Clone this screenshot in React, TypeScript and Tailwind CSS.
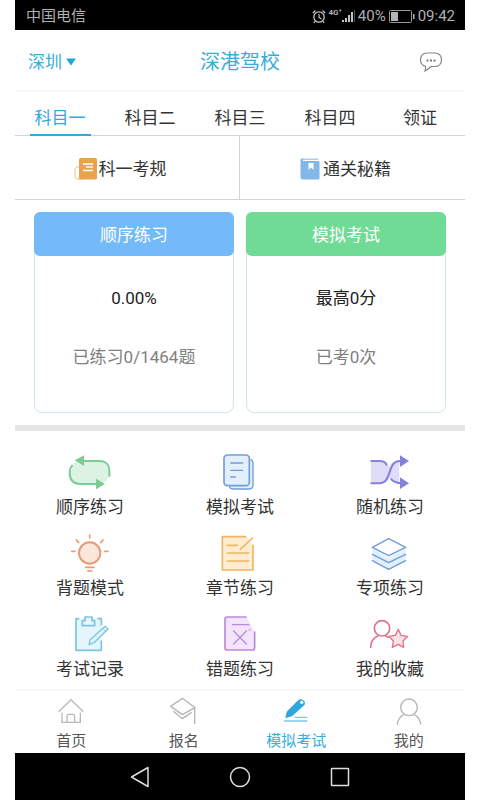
import { useState } from 'react';
import type { ReactNode } from 'react';

interface StatCardProps {
  title: string;
  value: string;
  detail: string;
  headerClass: string;
  borderClass: string;
}

interface MenuItem {
  label: string;
  icon: ReactNode;
}

const subjects = ['科目一', '科目二', '科目三', '科目四', '领证'];

const menuItems: MenuItem[] = [
  {
    label: '顺序练习',
    icon: (
      <svg viewBox="54 18 132 120" className="w-11 h-10" fill="none" aria-hidden="true">
        <rect x="60" y="48" width="118" height="69" rx="32" fill="#dcf3e3" />
        <g stroke="#7ccc95" strokeWidth="6" strokeLinecap="round">
          <path d="M98 48H148C168 48 178 60 178 76V93" />
          <path d="M66 62C61 67 59 73 59 82C59 105 68 117 90 117H140" />
        </g>
        <path d="M74 46L102 31V63Z M165 117L138 101V133Z" fill="#7ccc95" />
      </svg>
    ),
  },
  {
    label: '模拟考试',
    icon: (
      <svg viewBox="54 18 132 120" className="w-11 h-10" fill="none" aria-hidden="true">
        <path d="M84 122H148V45C156 45 159 50 159 57V120C159 128 155 132 148 132H100C94 132 90 129 88 124" fill="#e3effb" />
        <rect x="72" y="30" width="76" height="92" rx="10" fill="#e3effb" stroke="#6f9fd8" strokeWidth="5" />
        <g stroke="#6f9fd8" strokeWidth="4" strokeLinecap="round">
          <path d="M92 54H128M92 76H128M92 96H106" />
          <path d="M153 44C158 46 159 50 159 57V120C159 128 155 132 148 132H100C95 132 91 130 89 127" />
        </g>
      </svg>
    ),
  },
  {
    label: '随机练习',
    icon: (
      <svg viewBox="84 18 132 120" className="w-11 h-10" fill="none" aria-hidden="true">
        <path d="M93 48H122C136 48 142 56 147 65C153 54 162 48 178 48V112C162 112 152 108 148 97C143 108 134 116 120 116H93Z" fill="#dedcf6" />
        <g stroke="#8580dc" strokeWidth="6" strokeLinecap="round">
          <path d="M94 48H120C130 48 136 52 140 59" />
          <path d="M94 115H118C158 115 139 49 180 48" />
          <path d="M154 103C159 109 166 113 182 115" />
        </g>
        <path d="M207 48L180 31V66Z M207 115L180 97V132Z" fill="#8580dc" />
      </svg>
    ),
  },
  {
    label: '背题模式',
    icon: (
      <svg viewBox="54 261 132 120" className="w-11 h-10" fill="none" aria-hidden="true">
        <circle cx="119" cy="324" r="32" fill="#fde7dd" stroke="#e99a75" strokeWidth="6" />
        <g stroke="#e99a75" strokeWidth="5" strokeLinecap="round">
          <path d="M119 270V279M79 285L86 293M159 285L152 293M65 319H75M164 319H174" />
          <path d="M107 367H132M113 378H126" />
        </g>
      </svg>
    ),
  },
  {
    label: '章节练习',
    icon: (
      <svg viewBox="54 261 132 120" className="w-11 h-10" fill="none" aria-hidden="true">
        <path d="M67 275H142L158 300V375H67Z" fill="#fdecd0" />
        <g stroke="#efb664" strokeWidth="5" strokeLinecap="round" strokeLinejoin="round">
          <path d="M137 275H67V375H159V301" />
          <path d="M157 279L121 313M82 301H112M82 324H146M82 348H146" />
        </g>
      </svg>
    ),
  },
  {
    label: '专项练习',
    icon: (
      <svg viewBox="84 261 132 120" className="w-11 h-10" fill="none" aria-hidden="true">
        <path d="M97 310L146 338L197 310V347L146 374L97 347Z" fill="#e3effc" />
        <g stroke="#6c9edd" strokeWidth="4" strokeLinecap="round" strokeLinejoin="round">
          <path d="M146 281L197 307L146 332L97 307Z" fill="#fff" />
          <path d="M97 328L146 353L197 328M97 347L146 373L197 347" />
        </g>
      </svg>
    ),
  },
  {
    label: '考试记录',
    icon: (
      <svg viewBox="54 504 132 120" className="w-11 h-10" fill="none" aria-hidden="true">
        <path d="M78 521H154V616H78Z" fill="#e4f5fb" />
        <g stroke="#7cc5dd" strokeWidth="5" strokeLinecap="round" strokeLinejoin="round">
          <path d="M86 521H78V616H154V588M144 521H154V540" />
          <path d="M97 542V527H105V516H126V527H134V542Z" fill="#e4f5fb" />
          <path d="M117 599L121 584L165 544L174 552L132 593Z" fill="#e4f5fb" strokeWidth="4" />
          <path d="M158 550L167 559" strokeWidth="3" />
        </g>
      </svg>
    ),
  },
  {
    label: '错题练习',
    icon: (
      <svg viewBox="54 504 132 120" className="w-11 h-10" fill="none" aria-hidden="true">
        <path d="M75 516H140L164 558V615H75Z" fill="#f2e5fb" />
        <g stroke="#b98bdd" strokeLinecap="round" strokeLinejoin="round">
          <path d="M138 516H82C77 516 75 518 75 523V608C75 613 77 615 82 615H157C162 615 164 613 164 608V561" strokeWidth="5" />
          <path d="M97 539H147M101 558L139 597M139 558L101 597" strokeWidth="4" />
        </g>
        <path d="M143 557L150 549L153 557Z" fill="#d5b6ec" />
      </svg>
    ),
  },
  {
    label: '我的收藏',
    icon: (
      <svg viewBox="84 504 132 120" className="w-11 h-10" fill="none" aria-hidden="true">
        <g stroke="#e2728a" strokeWidth="5" strokeLinecap="round" strokeLinejoin="round">
          <circle cx="126" cy="550" r="23" />
          <path d="M92 607C92 591 101 578 115 572M136 572L145 577" />
          <path
            d="M175 553L183 571L203 574L189 588L191 607L175 598L157 607L160 588L147 574L166 571Z"
            fill="#fbe0e6"
            strokeWidth="4"
          />
        </g>
      </svg>
    ),
  },
];

const navItems: MenuItem[] = [
  {
    label: '首页',
    icon: (
      <svg viewBox="170 54 84 84" className="w-7 h-7" fill="none" stroke="#b9b9b9" strokeWidth="4" aria-hidden="true">
        <path d="M175 98L212 62L249 98M185 101V130H240V101M200 130V112C200 108 202 106 206 106H217C221 106 223 108 223 112V130" />
      </svg>
    ),
  },
  {
    label: '报名',
    icon: (
      <svg viewBox="510 54 84 84" className="w-7 h-7" fill="none" stroke="#b5b5b5" strokeWidth="4" aria-hidden="true">
        <path d="M512 82L547 58L585 86L547 107Z M520 97L547 119L575 100M584 86V135" />
      </svg>
    ),
  },
  {
    label: '模拟考试',
    icon: (
      <svg viewBox="127 54 84 84" className="w-7 h-7" fill="none" aria-hidden="true">
        <path d="M137 118L141 98L176 63C182 56 200 64 195 77L158 111Z" fill="#2ea7dc" />
        <circle cx="186" cy="70" r="5" fill="#fff" />
        <path d="M165 115H203M133 126H203" stroke="#7cc7e6" strokeWidth="4" />
      </svg>
    ),
  },
  {
    label: '我的',
    icon: (
      <svg viewBox="465 54 84 84" className="w-7 h-7" fill="none" stroke="#b5b5b5" strokeWidth="4" aria-hidden="true">
        <circle cx="507" cy="85" r="25" />
        <path d="M472 137C473 123 480 113 491 107M542 137C541 123 534 113 523 107" />
      </svg>
    ),
  },
];

function StatusBar() {
  return (
    <div className="flex h-[30px] items-center justify-between bg-black pl-[11px] pr-[10px] pt-[2px] text-[15px] leading-5 text-[#b0b0b0]">
      <span>中国电信</span>
      <div className="flex items-center gap-[3px]">
        <svg viewBox="0 0 14 15" className="h-[15px] w-[14px]" fill="none" stroke="#c4c4c4" aria-hidden="true">
          <circle cx="7" cy="8" r="5.2" strokeWidth="1.3" />
          <path d="M7 5V8.5L9.5 10M0.8 4L3.5 1.5M13.2 4L10.5 1.5M3 12.3L1.8 14M11 12.3L12.2 14" strokeWidth="1.2" />
        </svg>
        <div className="flex items-end">
          <span className="self-start text-[8px] font-bold leading-2">4G⁺</span>
          <svg viewBox="0 0 13 14" className="h-[14px] w-[13px]" aria-hidden="true">
            <path d="M0 11h2v2H0zM3 9h2v4H3zM6 6h2v7H6zM9 3h2v10H9z" fill="#c4c4c4" />
            <path d="M12 1h1v12h-1z" fill="#555" />
          </svg>
        </div>
        <span>40%</span>
        <svg viewBox="0 0 26 13" className="h-[13px] w-[26px]" aria-hidden="true">
          <rect x="0.5" y="0.5" width="22" height="12" rx="1" fill="none" stroke="#9a9a9a" />
          <path d="M2 2h7v9H2z" fill="#b4b4b4" />
          <path d="M24 4h1.500v5H24z" fill="#b4b4b4" />
        </svg>
        <span>09:42</span>
      </div>
    </div>
  );
}

function StatCard({ title, value, detail, headerClass, borderClass }: StatCardProps) {
  return (
    <section className={`flex-1 rounded-lg border pb-[43px] text-center text-[17px] leading-6 ${borderClass}`}>
      <h2 className={`-mx-px -mt-px rounded-md pb-[9px] pt-[11px] text-white ${headerClass}`}>{title}</h2>
      <p className="mt-[30px] text-[#222]">{value}</p>
      <p className="mt-[35px] text-[#808080]">{detail}</p>
    </section>
  );
}

export default function App() {
  const [subject, setSubject] = useState('科目一');
  const [page, setPage] = useState('模拟考试');

  return (
    <div className="bg-white px-[15px] font-[Roboto,'Noto_Sans_CJK_SC',sans-serif] text-[#333]">
      <StatusBar />

      <header className="grid h-[62px] grid-cols-3 items-center border-b-2 border-[#f7f7f7] px-[13px] pt-[3px]">
        <button className="flex items-center gap-1 text-[17px] leading-6 text-[#35aed8]">
          深圳
          <svg viewBox="0 0 10 8" className="h-2 w-[10px]" aria-hidden="true">
            <path d="M0 0.500h10L5 7.500z" fill="#22a7d8" />
          </svg>
        </button>
        <h1 className="text-center text-[20px] leading-7 text-[#35aed8]">深港驾校</h1>
        <button className="mr-[9px] justify-self-end" aria-label="消息">
          <svg viewBox="0 0 24 22" className="h-[22px] w-6" fill="none" aria-hidden="true">
            <path
              d="M8 2H16C20 2 22.500 5 22.500 8.700C22.500 12.500 20 15.500 16 15.500H12C10 17.500 8.500 19 6 20C6.800 18 7 16.500 6.500 15.300C3.500 14.500 1.500 12 1.500 8.700C1.500 5 4 2 8 2Z"
              stroke="#858585"
              strokeWidth="1.200"
            />
            <path d="M7.500 8.500h2v2h-2zM11 8.500h2v2h-2zM14.500 8.500h2v2h-2z" fill="#777" />
          </svg>
        </button>
      </header>

      <nav className="grid grid-cols-5 border-b border-[#d4d4d4]">
        {subjects.map((name) => (
          <button
            key={name}
            onClick={() => setSubject(name)}
            className={`-mb-px justify-self-center border-b-2 px-[5px] pb-1 pt-[14px] text-[17px] leading-6 ${
              name === subject ? 'border-[#2eaadc] text-[#2eaadc]' : 'border-transparent'
            }`}
          >
            {name}
          </button>
        ))}
      </nav>

      <div className="grid grid-cols-2 border-b border-[#d4d4d4] text-[17px] leading-6">
        <a href="#rules" className="flex h-[63px] items-center justify-center gap-px border-r border-[#d4d4d4] pr-[14px] pt-[2px]">
          <svg viewBox="0 0 24 22" className="h-[22px] w-6" aria-hidden="true">
            <path d="M5 9H3.500C2 9 1 10 1 11.500V18.500C1 20 2 21 3.500 21H8" fill="none" stroke="#efb87c" />
            <rect x="5" y="0" width="18" height="21.500" rx="1.500" fill="#eaa24c" />
            <path d="M9 6h10M12 9h7M9 12.500h10" stroke="#fff" strokeWidth="1.300" />
          </svg>
          科一考规
        </a>
        <a href="#tips" className="flex h-[63px] items-center justify-center gap-[3px] pr-[14px] pt-[2px]">
          <svg viewBox="0 0 20 22" className="h-[22px] w-5" aria-hidden="true">
            <path d="M2.500 0.500H18V2H2.500z" fill="#a9cdee" />
            <path d="M0.500 2.500C0.500 1 1.500 0.500 3 0.500V3H18C19 3 19.500 3.500 19.500 4.500V20C19.500 21 19 21.500 18 21.500H3C1.500 21.500 0.500 20.500 0.500 19Z" fill="#82b7e8" />
            <path d="M8.500 5H13.500V12L11 9.500L8.500 12z" fill="#fff" />
          </svg>
          通关秘籍
        </a>
      </div>

      <main>
        <div className="flex gap-3 border-b-[6px] border-[#e6e6e6] px-[19px] py-3">
          <StatCard
            title="顺序练习"
            value="0.00%"
            detail="已练习0/1464题"
            headerClass="bg-[#74baf8]"
            borderClass="border-[#cfe6ee]"
          />
          <StatCard
            title="模拟考试"
            value="最高0分"
            detail="已考0次"
            headerClass="bg-[#70db94]"
            borderClass="border-[#cdeadb]"
          />
        </div>

        <div className="grid grid-cols-3 gap-y-[13px] pb-2 pt-5">
          {menuItems.map((item) => (
            <button key={item.label} className="flex flex-col items-center gap-1 text-[17px] leading-6">
              {item.icon}
              {item.label}
            </button>
          ))}
        </div>
      </main>

      <nav className="grid grid-cols-4 border-t-2 border-[#f5f7f8] pt-[6px]">
        {navItems.map((item) => (
          <button
            key={item.label}
            onClick={() => setPage(item.label)}
            className={`flex flex-col items-center gap-1 text-[15px] leading-6 ${
              item.label === page ? 'text-[#35aee0]' : 'text-[#555]'
            }`}
          >
            {item.icon}
            {item.label}
          </button>
        ))}
      </nav>

      {/* Android system keys */}
      <div className="flex h-[47px] items-center justify-center gap-[76px] bg-black">
        <button aria-label="返回">
          <svg viewBox="0 0 24 24" className="size-6" fill="none" stroke="#ddd" strokeWidth="1.500" strokeLinejoin="round" aria-hidden="true">
            <path d="M20 2.500V21.500L3.500 12Z" />
          </svg>
        </button>
        <button aria-label="主屏幕">
          <svg viewBox="0 0 24 24" className="size-6" fill="none" stroke="#ddd" strokeWidth="1.500" aria-hidden="true">
            <circle cx="12" cy="12" r="9.500" />
          </svg>
        </button>
        <button aria-label="最近任务">
          <svg viewBox="0 0 24 24" className="size-6" fill="none" stroke="#ddd" strokeWidth="1.500" aria-hidden="true">
            <rect x="3.500" y="3.500" width="17" height="17" rx="0.500" />
          </svg>
        </button>
      </div>
    </div>
  );
}
